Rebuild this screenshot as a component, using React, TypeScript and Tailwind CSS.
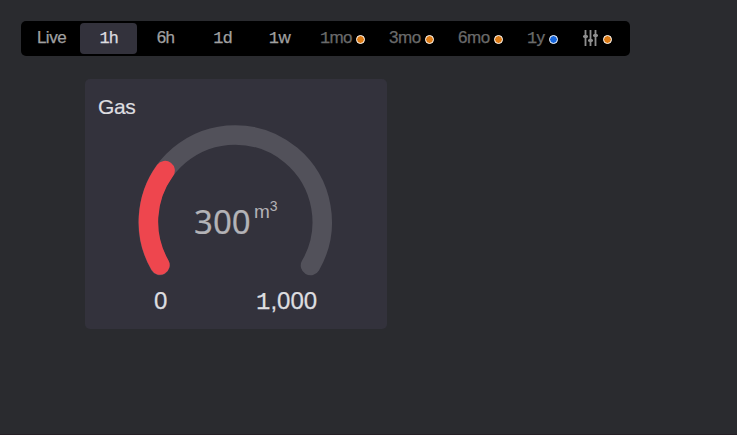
import React from "react";

type Range = { label: string; width: string; dot?: string; text: string };

const ranges: Range[] = [
  { label: "Live", width: "w-[57px]", text: "tracking-[-0.5px]" },
  { label: "1h", width: "w-[57px]", text: "tracking-[-0.8px]" },
  { label: "6h", width: "w-[57px]", text: "tracking-[-0.6px]" },
  { label: "1d", width: "w-[57px]", text: "tracking-[-0.6px]" },
  { label: "1w", width: "w-[57px]", text: "tracking-[-0.6px]" },
  { label: "1mo", width: "w-[69px]", dot: "bg-[#dc7a14]", text: "w-[35px] tracking-[-0.7px]" },
  { label: "3mo", width: "w-[69px]", dot: "bg-[#dc7a14]", text: "w-[35px] tracking-[-0.4px]" },
  { label: "6mo", width: "w-[69px]", dot: "bg-[#dc7a14]", text: "w-[35px] tracking-[-0.4px]" },
  { label: "1y", width: "w-[56px]", dot: "bg-[#1766dc]", text: "w-[21px] tracking-[-0.8px]" },
];

// Digit one is set in the mono face so that it keeps its foot serif.
function Label({ text }: { text: string }) {
  return text[0] === "1" ? (
    <>
      <span className="font-['Liberation_Mono',monospace] [-webkit-text-stroke-width:0.25px]">1</span>
      {text.slice(1)}
    </>
  ) : (
    <>{text}</>
  );
}

function Dot({ color }: { color: string }) {
  return <span className={`size-[9px] shrink-0 rounded-full border border-white ${color}`} />;
}

function SlidersIcon() {
  return (
    <svg width="15" height="18" viewBox="0 0 15 18" fill="none" stroke="#8f8f8f">
      <path d="M2.5 1V17M7.5 1V17M12.5 1V17" strokeWidth="1.8" />
      <path d="M0 7.5H5M5 11.5H10M10 6.5H15" strokeWidth="2.2" />
      <path d="M2.5 6V9M7.5 10V13M12.5 5V8" strokeWidth="2.8" />
    </svg>
  );
}

export default function App() {
  return (
    <div className="h-[435px] w-[737px] overflow-hidden border-b border-[#251f25] bg-[#2a2b2f] pl-[21px] pt-[21px] font-['Liberation_Sans',Arial,sans-serif]">
      <nav className="flex h-[35px] w-[609px] rounded-[5px] bg-black p-[2px]">
        {ranges.map((r) => (
          <button
            key={r.label}
            className={`flex h-[31px] shrink-0 items-center rounded-[4px] pb-[2px] text-[17px] leading-none whitespace-nowrap [-webkit-text-stroke-width:0.25px] ${r.width} ${
              r.dot ? "pl-3 text-[#6a6a6a]" : "justify-center"
            } ${r.label === "1h" ? "bg-[#33323c] text-[#dedee0]" : r.dot ? "" : "text-[#a0a0a0]"}`}
          >
            <span className={`shrink-0 text-left ${r.text}`}>
              <Label text={r.label} />
            </span>
            {r.dot && <span className="ml-px flex pt-[3px]"><Dot color={r.dot} /></span>}
          </button>
        ))}
        <button className="flex h-[31px] w-[57px] items-center gap-[5px] pb-px pl-3">
          <SlidersIcon />
          <span className="flex pt-[2px]"><Dot color="bg-[#dc7a14]" /></span>
        </button>
      </nav>

      <section className="ml-[64px] mt-[23px] h-[250px] w-[301.5px] rounded-[5px] bg-[#33323c] pt-[15px]">
        <h2 className="ml-[13px] h-[26px] text-[21px] leading-[26px] tracking-[-0.4px] text-[#dedee0] [-webkit-text-stroke-width:0.2px]">Gas</h2>
        <div className="ml-[50px] grid h-[160px] w-[200px] place-items-start">
          <svg className="col-start-1 row-start-1" width="200" height="160" viewBox="135 120 200 160" fill="none" strokeWidth="19.5" strokeLinecap="round">
            <path d="M159.9 265.5A87 87 0 1 1 310.5 265.5" stroke="#52515a" />
            <path d="M159.9 265A87 87 0 0 1 165.1 170.6" stroke="#ee464e" />
          </svg>
          <div className="col-start-1 row-start-1 ml-[59px] mt-[79px] flex text-[#b3b3b7]">
            <span className="w-[60px] font-['Noto_Sans',sans-serif] text-[33px] leading-[45px] [-webkit-text-stroke-width:0.2px]">300</span>
            <span className="text-[19px] leading-[26px]">
              m<sup className="text-[14px]">3</sup>
            </span>
          </div>
        </div>
        <div className="flex pl-[69px] text-[24px] leading-[30px] text-[#dedee0] [-webkit-text-stroke-width:0.25px]">
          <span className="mt-[6px] w-[102px]">0</span>
          <span className="mt-[6px]"><Label text="1,000" /></span>
        </div>
      </section>
    </div>
  );
}
